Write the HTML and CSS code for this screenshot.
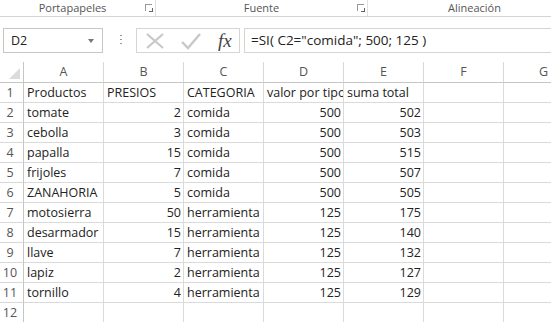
FILE: index.html
```html
<!DOCTYPE html>
<html lang="es">
<head>
<meta charset="UTF-8" />
<title>Libro1 - Excel</title>
<link rel="stylesheet" href="styles.css">
</head>
<body>
<div class="ribbon">
  <div class="group g1">Portapapeles<span class="launch"></span></div>
  <div class="group g2">Fuente<span class="launch"></span></div>
  <div class="group g3">Alineación</div>
</div>

<div class="fbar">
  <div class="namebox">D2<span class="arrow"></span></div>
  <div class="dots"></div>
  <div class="fbtns">
    <svg width="22" height="18" viewBox="0 0 22 18"><path d="M3 2 L19 16 M19 2 L3 16" stroke="#c8c8c8" stroke-width="2.2" fill="none"/></svg>
    <svg width="22" height="18" viewBox="0 0 22 18"><path d="M2 10 L8 16 L20 2" stroke="#c8c8c8" stroke-width="2.4" fill="none"/></svg>
    <span class="fx">fx</span>
  </div>
  <div class="formula">=SI( C2="comida"; 500; 125 )</div>
</div>

<div class="sheet">
  <div class="corner"><span class="tri"></span></div>
  <div class="colh">A</div><div class="colh">B</div><div class="colh">C</div><div class="colh">D</div><div class="colh">E</div><div class="colh">F</div><div class="colh">G</div>

  <div class="rowh">1</div><div class="c">Productos</div><div class="c">PRESIOS</div><div class="c">CATEGORIA</div><div class="c">valor por tipo</div><div class="c">suma total</div><div class="c"></div><div class="c"></div>
  <div class="rowh">2</div><div class="c">tomate</div><div class="c n">2</div><div class="c">comida</div><div class="c n">500</div><div class="c n">502</div><div class="c"></div><div class="c"></div>
  <div class="rowh">3</div><div class="c">cebolla</div><div class="c n">3</div><div class="c">comida</div><div class="c n">500</div><div class="c n">503</div><div class="c"></div><div class="c"></div>
  <div class="rowh">4</div><div class="c">papalla</div><div class="c n">15</div><div class="c">comida</div><div class="c n">500</div><div class="c n">515</div><div class="c"></div><div class="c"></div>
  <div class="rowh">5</div><div class="c">frijoles</div><div class="c n">7</div><div class="c">comida</div><div class="c n">500</div><div class="c n">507</div><div class="c"></div><div class="c"></div>
  <div class="rowh">6</div><div class="c">ZANAHORIA</div><div class="c n">5</div><div class="c">comida</div><div class="c n">500</div><div class="c n">505</div><div class="c"></div><div class="c"></div>
  <div class="rowh">7</div><div class="c">motosierra</div><div class="c n">50</div><div class="c">herramienta</div><div class="c n">125</div><div class="c n">175</div><div class="c"></div><div class="c"></div>
  <div class="rowh">8</div><div class="c">desarmador</div><div class="c n">15</div><div class="c">herramienta</div><div class="c n">125</div><div class="c n">140</div><div class="c"></div><div class="c"></div>
  <div class="rowh">9</div><div class="c">llave</div><div class="c n">7</div><div class="c">herramienta</div><div class="c n">125</div><div class="c n">132</div><div class="c"></div><div class="c"></div>
  <div class="rowh">10</div><div class="c">lapiz</div><div class="c n">2</div><div class="c">herramienta</div><div class="c n">125</div><div class="c n">127</div><div class="c"></div><div class="c"></div>
  <div class="rowh">11</div><div class="c">tornillo</div><div class="c n">4</div><div class="c">herramienta</div><div class="c n">125</div><div class="c n">129</div><div class="c"></div><div class="c"></div>
  <div class="rowh">12</div><div class="c"></div><div class="c"></div><div class="c"></div><div class="c"></div><div class="c"></div><div class="c"></div><div class="c"></div>
</div>
</body>
</html>
```

FILE: styles.css
```css
body { margin: 0; width: 551px; height: 322px; overflow: hidden; background: #fff; font-family: "Open Sans", "Liberation Sans", sans-serif; color: #222; }

.ribbon { display: flex; height: 16px; border-bottom: 1px solid #d5d5d5; font-size: 11px; color: #555; }
.group { position: relative; text-align: center; line-height: 15px; border-right: 1px solid #e0e0e0; }
.g1 { width: 156px; padding-right: 10px; box-sizing: border-box; }
.g2 { width: 211px; }
.g3 { flex: 1; border-right: none; padding-left: 30px; }
.launch { position: absolute; right: 3px; top: 4px; width: 6px; height: 6px; border-top: 1px solid #999; border-left: 1px solid #999; }
.launch::after { content: ""; position: absolute; right: -1px; bottom: -1px; width: 3px; height: 3px; border-right: 1px solid #666; border-bottom: 1px solid #666; }

.fbar { display: flex; align-items: center; height: 27px; margin-top: 10px; padding-left: 3px; }
.namebox { position: relative; width: 100px; height: 25px; border: 1px solid #c6c6c6; box-sizing: border-box; font-size: 12.5px; line-height: 23px; padding-left: 7px; }
.arrow { position: absolute; right: 8px; top: 10px; border-left: 3px solid transparent; border-right: 3px solid transparent; border-top: 4px solid #777; }
.dots { width: 2px; height: 11px; margin: 0 14px 0 17px; background: repeating-linear-gradient(#999 0 1px, transparent 1px 4px); }
.fbtns { display: flex; align-items: center; gap: 14px; width: 104px; height: 25px; padding-left: 7px; border: 1px solid #d5d5d5; box-sizing: border-box; }
.fx { font-family: "Liberation Serif", serif; font-style: italic; font-size: 19px; color: #444; margin-left: 2px; }
.formula { flex: 1; height: 25px; margin-left: 4px; border-top: 1px solid #d5d5d5; border-bottom: 1px solid #d5d5d5; border-left: 1px solid #d5d5d5; box-sizing: border-box; font-size: 13.5px; line-height: 23px; padding-left: 6px; }

.sheet { display: grid; grid-template-columns: 24px repeat(7, 80px); grid-auto-rows: 20px; grid-template-rows: 21px; width: 551px; overflow: hidden; margin-top: 8px; font-size: 12.5px; }
.corner { position: relative; border-right: 1px solid #c6c6c6; border-bottom: 1px solid #c6c6c6; }
.tri { position: absolute; right: 3px; bottom: 3px; border-left: 11px solid transparent; border-bottom: 11px solid #dcdcdc; }
.colh { text-align: center; color: #555; line-height: 20px; border-right: 1px solid #d8d8d8; border-bottom: 1px solid #c6c6c6; }
.rowh { text-align: center; color: #555; line-height: 19px; border-right: 1px solid #c6c6c6; border-bottom: 1px solid #d8d8d8; padding-right: 3px; }
.c { border-right: 1px solid #dadada; border-bottom: 1px solid #dadada; line-height: 19px; padding: 0 2px 0 3px; white-space: nowrap; overflow: hidden; }
.n { text-align: right; }
```
